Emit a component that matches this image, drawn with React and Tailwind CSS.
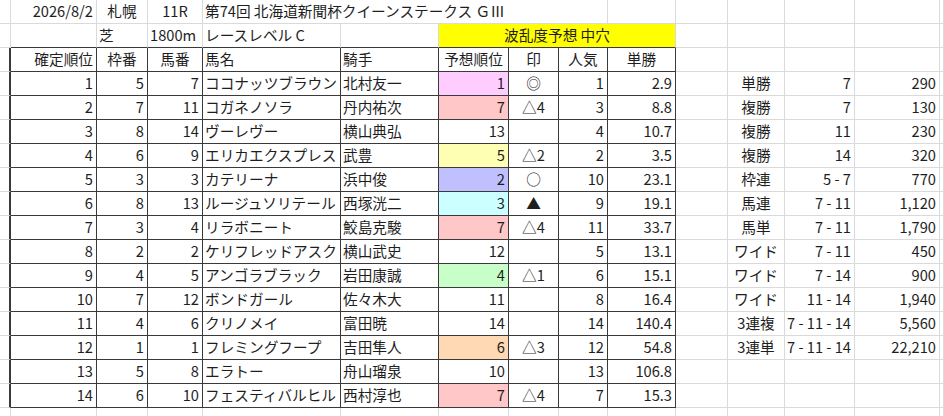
import React from "react";

const GRID =
  "grid grid-cols-[11px_86px_51px_55px_138px_98px_70px_50px_49px_68px_52px_57px_70px_85px_1fr]";

const BASE =
  "h-[24px] border-r border-b flex items-center whitespace-nowrap overflow-visible";
const LT = "border-[#dadada]";
const DK = "border-[#3a3a3a]";
const R = "justify-end pr-[3px]";
const L = "justify-start pl-[2px]";
const M = "justify-center";

function Cell({ cls = "", children }) {
  return <div className={BASE + " " + cls}>{children}</div>;
}

const rows = [
  [1, 5, 7, "ココナッツブラウン", "北村友一", 1, "bg-[#ffccff]", "◎", 1, "2.9"],
  [2, 7, 11, "コガネノソラ", "丹内祐次", 7, "bg-[#ffc7c7]", "△4", 3, "8.8"],
  [3, 8, 14, "ヴーレヴー", "横山典弘", 13, "", "", 4, "10.7"],
  [4, 6, 9, "エリカエクスプレス", "武豊", 5, "bg-[#ffffb3]", "△2", 2, "3.5"],
  [5, 3, 3, "カテリーナ", "浜中俊", 2, "bg-[#c0c0ff]", "○", 10, "23.1"],
  [6, 8, 13, "ルージュソリテール", "西塚洸二", 3, "bg-[#ccffff]", "▲", 9, "19.1"],
  [7, 3, 4, "リラボニート", "鮫島克駿", 7, "bg-[#ffc7c7]", "△4", 11, "33.7"],
  [8, 2, 2, "ケリフレッドアスク", "横山武史", 12, "", "", 5, "13.1"],
  [9, 4, 5, "アンゴラブラック", "岩田康誠", 4, "bg-[#c8ffc8]", "△1", 6, "15.1"],
  [10, 7, 12, "ボンドガール", "佐々木大", 11, "", "", 8, "16.4"],
  [11, 4, 6, "クリノメイ", "富田暁", 14, "", "", 14, "140.4"],
  [12, 1, 1, "フレミングフープ", "吉田隼人", 6, "bg-[#ffd9b3]", "△3", 12, "54.8"],
  [13, 5, 8, "エラトー", "舟山瑠泉", 10, "", "", 13, "106.8"],
  [14, 6, 10, "フェスティバルヒル", "西村淳也", 7, "bg-[#ffc7c7]", "△4", 7, "15.3"],
];

const payouts = [
  ["単勝", "7", "290"],
  ["複勝", "7", "130"],
  ["複勝", "11", "230"],
  ["複勝", "14", "320"],
  ["枠連", "5 - 7", "770"],
  ["馬連", "7 - 11", "1,120"],
  ["馬単", "7 - 11", "1,790"],
  ["ワイド", "7 - 11", "450"],
  ["ワイド", "7 - 14", "900"],
  ["ワイド", "11 - 14", "1,940"],
  ["3連複", "7 - 11 - 14", "5,560"],
  ["3連単", "7 - 11 - 14", "22,210"],
];

function RightCells({ p }) {
  return (
    <>
      <Cell cls={LT} />
      <Cell cls={LT + " " + M}>{p ? p[0] : ""}</Cell>
      <Cell cls={LT + " " + R}>{p ? p[1] : ""}</Cell>
      <Cell cls={LT + " " + R}>{p ? p[2] : ""}</Cell>
      <Cell cls={LT} />
    </>
  );
}

export default function App() {
  return (
    <div
      className="w-[944px] h-[416px] overflow-hidden bg-white text-[#1e1e1e] text-[14.67px] leading-none"
      style={{ fontFamily: '"Noto Sans CJK JP", "Noto Sans", sans-serif' }}
    >
      <div className={GRID}>
        {/* Row 1 */}
        <Cell cls={LT} />
        <Cell cls={LT + " " + R}>2026/8/2</Cell>
        <Cell cls={LT + " " + M}>札幌</Cell>
        <Cell cls={LT + " " + M}>11R</Cell>
        <div className={BASE + " col-span-5 " + LT + " " + L}>
          第74回 北海道新聞杯クイーンステークス ＧⅢ
        </div>
        <Cell cls={LT} />
        <RightCells />

        {/* Row 2 */}
        <Cell cls={LT} />
        <Cell cls={"border-r-[#dadada] border-b-[#3a3a3a]"} />
        <Cell cls={"border-r-[#dadada] border-b-[#3a3a3a] " + L}>芝</Cell>
        <Cell cls={"border-r-[#dadada] border-b-[#3a3a3a] " + L}>1800m</Cell>
        <Cell cls={"border-r-[#dadada] border-b-[#3a3a3a] " + L}>レースレベル C</Cell>
        <Cell cls={"border-r-[#dadada] border-b-[#3a3a3a]"} />
        <div
          className={
            BASE +
            " col-span-4 bg-[#ffff00] border-r-[#dadada] border-b-[#3a3a3a] " +
            M
          }
        >
          波乱度予想 中穴
        </div>
        <RightCells />

        {/* Header row */}
        <div className={BASE + " border-r-2 border-r-[#3a3a3a] border-b-[#dadada]"} />
        <Cell cls={DK + " " + R}>確定順位</Cell>
        <Cell cls={DK + " " + M}>枠番</Cell>
        <Cell cls={DK + " " + M}>馬番</Cell>
        <Cell cls={DK + " " + L}>馬名</Cell>
        <Cell cls={DK + " " + L}>騎手</Cell>
        <Cell cls={DK + " " + M}>予想順位</Cell>
        <Cell cls={DK + " " + M}>印</Cell>
        <Cell cls={DK + " " + M}>人気</Cell>
        <Cell cls={DK + " " + M}>単勝</Cell>
        <RightCells />

        {rows.map((r, i) => (
          <React.Fragment key={i}>
            <div className={BASE + " border-r-2 border-r-[#3a3a3a] border-b-[#dadada]"} />
            <Cell cls={DK + " " + R}>{r[0]}</Cell>
            <Cell cls={DK + " " + R}>{r[1]}</Cell>
            <Cell cls={DK + " " + R}>{r[2]}</Cell>
            <Cell cls={DK + " " + L}>{r[3]}</Cell>
            <Cell cls={DK + " " + L}>{r[4]}</Cell>
            <Cell cls={DK + " " + R + " " + r[6]}>{r[5]}</Cell>
            <Cell cls={DK + " " + M}>{r[7]}</Cell>
            <Cell cls={DK + " " + R}>{r[8]}</Cell>
            <Cell cls={DK + " " + R}>{r[9]}</Cell>
            <RightCells p={payouts[i]} />
          </React.Fragment>
        ))}

        {/* trailing partial row */}
        {Array.from({ length: 15 }).map((_, i) => (
          <Cell key={"t" + i} cls={LT} />
        ))}
      </div>
    </div>
  );
}
